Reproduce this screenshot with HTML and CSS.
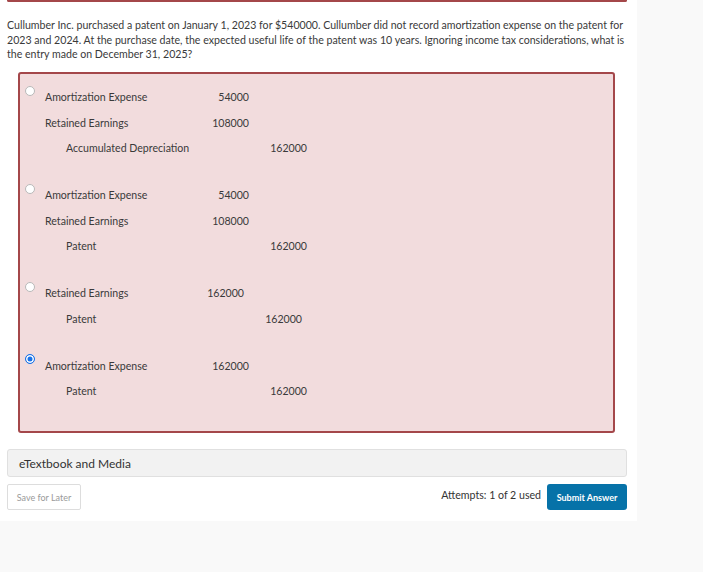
FILE: index.html
```html
<!DOCTYPE html>
<html>
<head>
<meta charset="utf-8">
<link rel="stylesheet" href="styles.css">
</head>
<body>
<div class="panel">
  <div class="prev-box"></div>
  <p class="question">Cullumber Inc. purchased a patent on January 1, 2023 for $540000. Cullumber did not record amortization expense on the patent for 2023 and 2024. At the purchase date, the expected useful life of the patent was 10 years. Ignoring income tax considerations, what is the entry made on December 31, 2025?</p>
  <div class="answers">
    <div class="option">
      <span class="radio"></span>
      <div class="entry">
        <div class="acct">Amortization Expense</div><div class="dr">54000</div><div class="cr"></div>
        <div class="acct">Retained Earnings</div><div class="dr">108000</div><div class="cr"></div>
        <div class="acct indent">Accumulated Depreciation</div><div class="dr"></div><div class="cr">162000</div>
      </div>
    </div>
    <div class="option">
      <span class="radio"></span>
      <div class="entry">
        <div class="acct">Amortization Expense</div><div class="dr">54000</div><div class="cr"></div>
        <div class="acct">Retained Earnings</div><div class="dr">108000</div><div class="cr"></div>
        <div class="acct indent">Patent</div><div class="dr"></div><div class="cr">162000</div>
      </div>
    </div>
    <div class="option">
      <span class="radio"></span>
      <div class="entry narrow">
        <div class="acct">Retained Earnings</div><div class="dr">162000</div><div class="cr"></div>
        <div class="acct indent">Patent</div><div class="dr"></div><div class="cr">162000</div>
      </div>
    </div>
    <div class="option">
      <span class="radio checked"></span>
      <div class="entry">
        <div class="acct">Amortization Expense</div><div class="dr">162000</div><div class="cr"></div>
        <div class="acct indent">Patent</div><div class="dr"></div><div class="cr">162000</div>
      </div>
    </div>
  </div>
  <div class="media">eTextbook and Media</div>
  <div class="actions">
    <button class="save">Save for Later</button>
    <div class="right">
      <span class="attempts">Attempts: 1 of 2 used</span>
      <button class="submit">Submit Answer</button>
    </div>
  </div>
</div>
</body>
</html>
```

FILE: styles.css
```css
html, body {
  margin: 0;
  padding: 0;
  background: #f9f9f9;
  font-family: Lato, "Open Sans", sans-serif;
  color: #333;
}

.panel {
  width: 637px;
  height: 521px;
  box-sizing: border-box;
  background: #fff;
  padding: 0 10px 0 7px;
}

.prev-box {
  height: 0;
  border: 2px solid #a4474a;
  border-top: none;
  border-radius: 0 0 3px 3px;
}

.question {
  margin: 16px 0 0;
  font-size: 10.6px;
  line-height: 14.5px;
  color: #3a3a3a;
}

.answers {
  margin: 10px 12px 0 11px;
  border: 2px solid #a4474a;
  border-radius: 3px;
  background: #f2dcdd;
  padding: 11px 0 27px 5px;
}

.option {
  display: flex;
  align-items: flex-start;
  margin-bottom: 21.5px;
}
.option:last-child { margin-bottom: 0; }

.radio {
  width: 10px;
  height: 10px;
  box-sizing: border-box;
  border: 1px solid #b9b9b9;
  border-radius: 50%;
  background: #fff;
  margin-top: 1px;
  margin-right: 10px;
  flex: none;
}
.radio.checked {
  border: 1px solid #1a73e8;
  background: #1a73e8;
  box-shadow: inset 0 0 0 1.5px #fff;
}

.entry {
  display: grid;
  grid-template-columns: 150px 54px 58px;
  grid-auto-rows: 25.5px;
  font-size: 10.6px;
  color: #3a3a3a;
}
.entry.narrow {
  grid-template-columns: 145px 54px 58px;
}

.acct, .dr, .cr {
  display: flex;
  align-items: center;
  white-space: nowrap;
}
.dr, .cr { justify-content: flex-end; }
.indent { padding-left: 21px; }

.media {
  margin-top: 16px;
  height: 28px;
  box-sizing: border-box;
  border: 1px solid #e0e0e0;
  border-radius: 3px;
  background: #f2f2f2;
  padding-left: 11px;
  display: flex;
  align-items: center;
  font-size: 12px;
  color: #333;
}

.actions {
  margin-top: 7px;
  display: flex;
  justify-content: space-between;
  align-items: center;
}

.save {
  width: 74px;
  height: 26px;
  border: 1px solid #ddd;
  border-radius: 2px;
  background: #fff;
  color: #9a9a9a;
  font-family: Lato, sans-serif;
  font-size: 9px;
  padding: 0;
}

.right {
  display: flex;
  align-items: center;
  gap: 6px;
}

.attempts {
  font-size: 10.6px;
  color: #333;
  margin-top: -4px;
}

.submit {
  width: 80px;
  height: 26px;
  border: none;
  border-radius: 3px;
  background: #0672a8;
  color: #fff;
  font-family: Lato, sans-serif;
  font-weight: bold;
  font-size: 9px;
  padding: 0;
}
```
